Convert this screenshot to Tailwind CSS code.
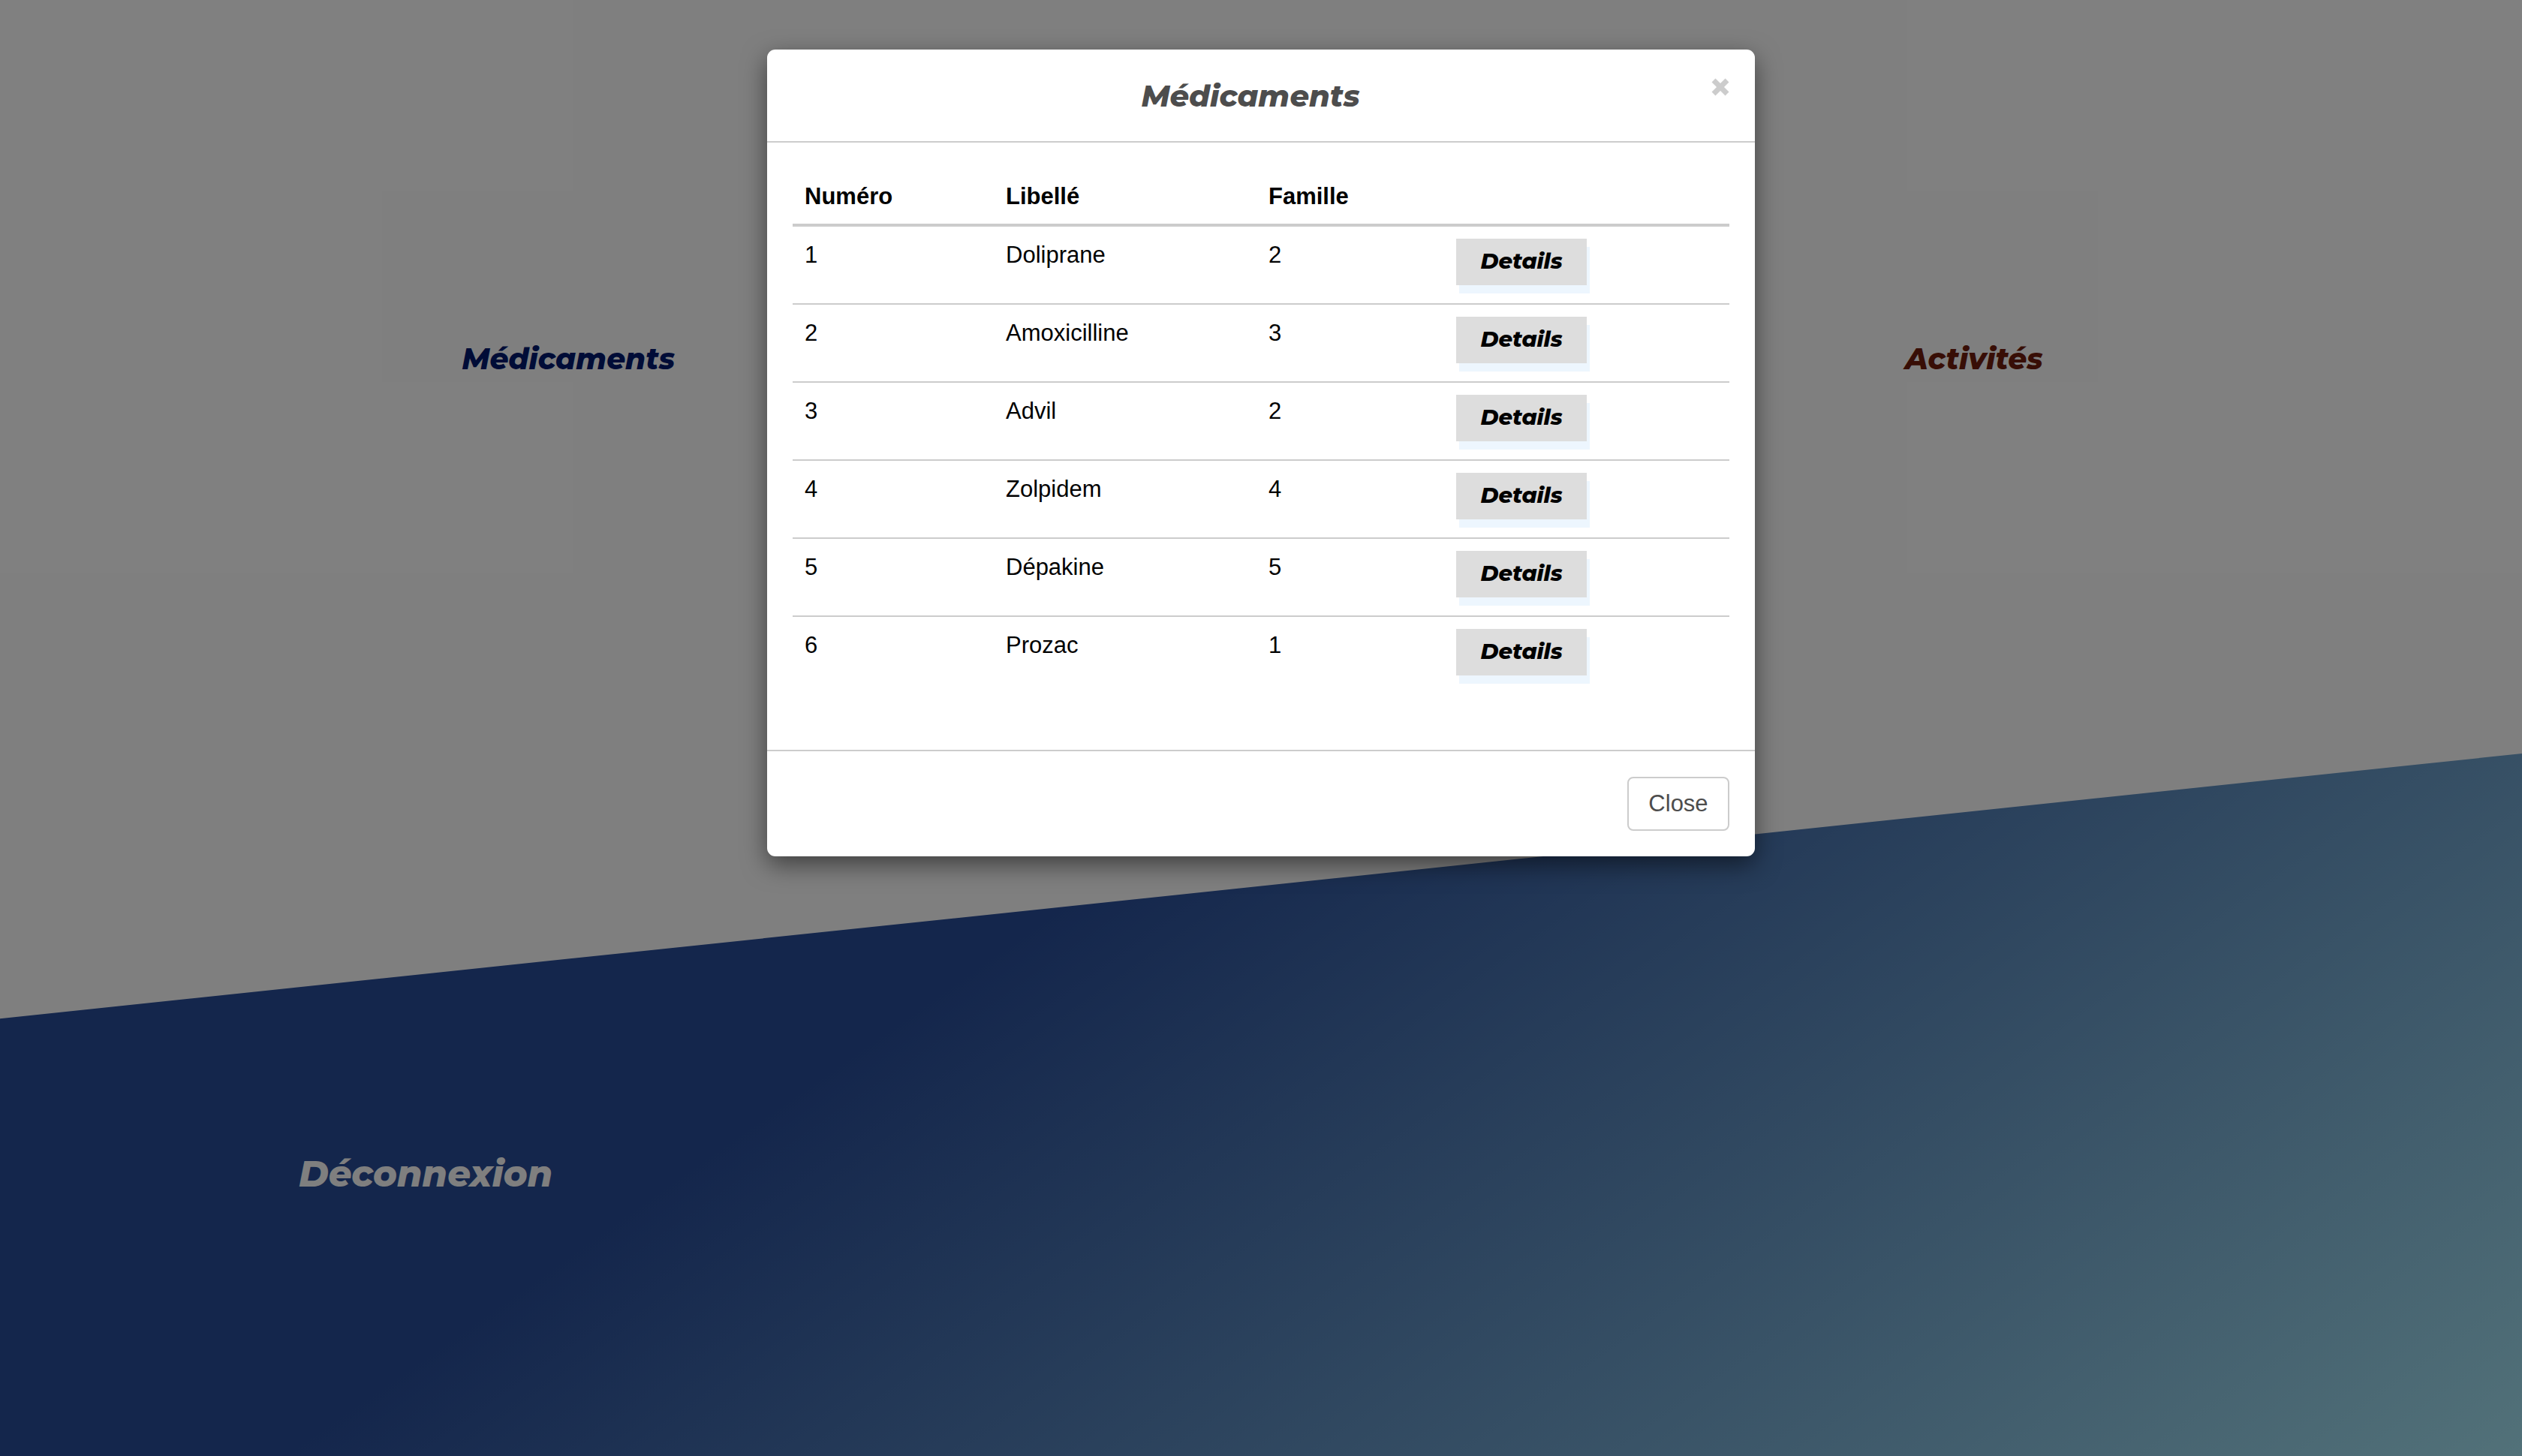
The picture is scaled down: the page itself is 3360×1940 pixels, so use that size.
<!DOCTYPE html>
<html lang="fr">
<head>
<meta charset="utf-8">
<title>Médicaments</title>
<script src="https://cdn.jsdelivr.net/npm/@tailwindcss/browser@4"></script>
</head>
<body class="font-['Liberation_Sans',Arial,sans-serif] text-[31px] leading-[44px] text-black">
<div class="relative flex h-screen flex-col overflow-hidden bg-white">
  <nav class="mr-[7.8%] ml-[8.6%] grid grid-cols-3 pt-[454px] font-[Montserrat,Inter,sans-serif] text-[39px] leading-[48px] font-extrabold italic">
    <a href="#" class="justify-self-center text-[#00186e]">Médicaments</a>
    <a href="#" class="col-start-3 justify-self-center text-[#701c0c]">Activités</a>
  </nav>
  <div class="relative mt-[502px] flex-1">
    <div class="absolute inset-x-0 top-0 h-[1200px] origin-top-right -skew-y-6 bg-[linear-gradient(149deg,#284c98_26%,#b4f6fe)]"></div>
    <a href="#" class="relative mt-[530px] ml-[398px] inline-block font-[Montserrat,Inter,sans-serif] text-[48px] leading-[60px] font-extrabold italic text-white">Déconnexion</a>
  </div>
  <div class="absolute inset-0 bg-black/50"></div>
</div>
<div class="absolute inset-x-0 top-[66px] flex justify-center">
  <div role="dialog" aria-labelledby="dialog-title" class="w-[1316px] rounded-[11px] bg-white shadow-[0_11px_33px_rgba(0,0,0,0.5)]">
    <header class="flex h-[124px] items-start border-b-2 border-[#ccc] px-[34px] pt-[34px]">
      <h4 id="dialog-title" class="flex-1 pr-1 text-center font-[Montserrat,Inter,sans-serif] text-[40px] leading-[56px] font-extrabold italic text-[#4d4d4d]">Médicaments</h4>
      <button type="button" aria-label="Fermer" class="pt-1 text-[#ccc]">
        <svg width="24" height="24" viewBox="0 0 24 24" fill="none" stroke="currentColor" stroke-width="7"><path d="M3 3L21 21M21 3L3 21"/></svg>
      </button>
    </header>
    <div class="px-[34px] pt-[34px] pb-[74px]">
      <table class="w-full table-fixed border-collapse text-left">
        <colgroup><col class="w-[268px]"><col class="w-[350px]"><col class="w-[250px]"><col></colgroup>
        <thead><tr class="h-[76px] border-b-4 border-[#ccc]"><th class="px-4 pt-0.5">Numéro</th><th class="px-4 pt-0.5">Libellé</th><th class="px-4 pt-0.5">Famille</th><th></th></tr></thead>
        <tbody id="rows"></tbody>
      </table>
    </div>
    <footer class="flex justify-end border-t-2 border-[#ccc] p-[34px]">
      <button type="button" class="h-[72px] w-[136px] rounded-lg border-2 border-[#ccc] text-[#4d4d4d]">Close</button>
    </footer>
  </div>
</div>
<script>
const rows = [[1,"Doliprane",2],[2,"Amoxicilline",3],[3,"Advil",2],[4,"Zolpidem",4],[5,"Dépakine",5],[6,"Prozac",1]];
document.getElementById("rows").innerHTML = rows.map(r =>
  `<tr class="h-[104px] border-b-2 border-[#ccc] align-top first:h-[105px] last:border-b-0">${r.map(c => `<td class="px-4 pt-4">${c}</td>`).join("")}<td class="px-4 pt-4"><button type="button" class="block h-[62px] w-[174px] bg-[#ddd] pb-0.5 font-[Montserrat,Inter,sans-serif] text-[29px] leading-[40px] font-extrabold italic shadow-[4px_11px_0_#edf6fe]">Details</button></td></tr>`).join("");
</script>
</body>
</html>
